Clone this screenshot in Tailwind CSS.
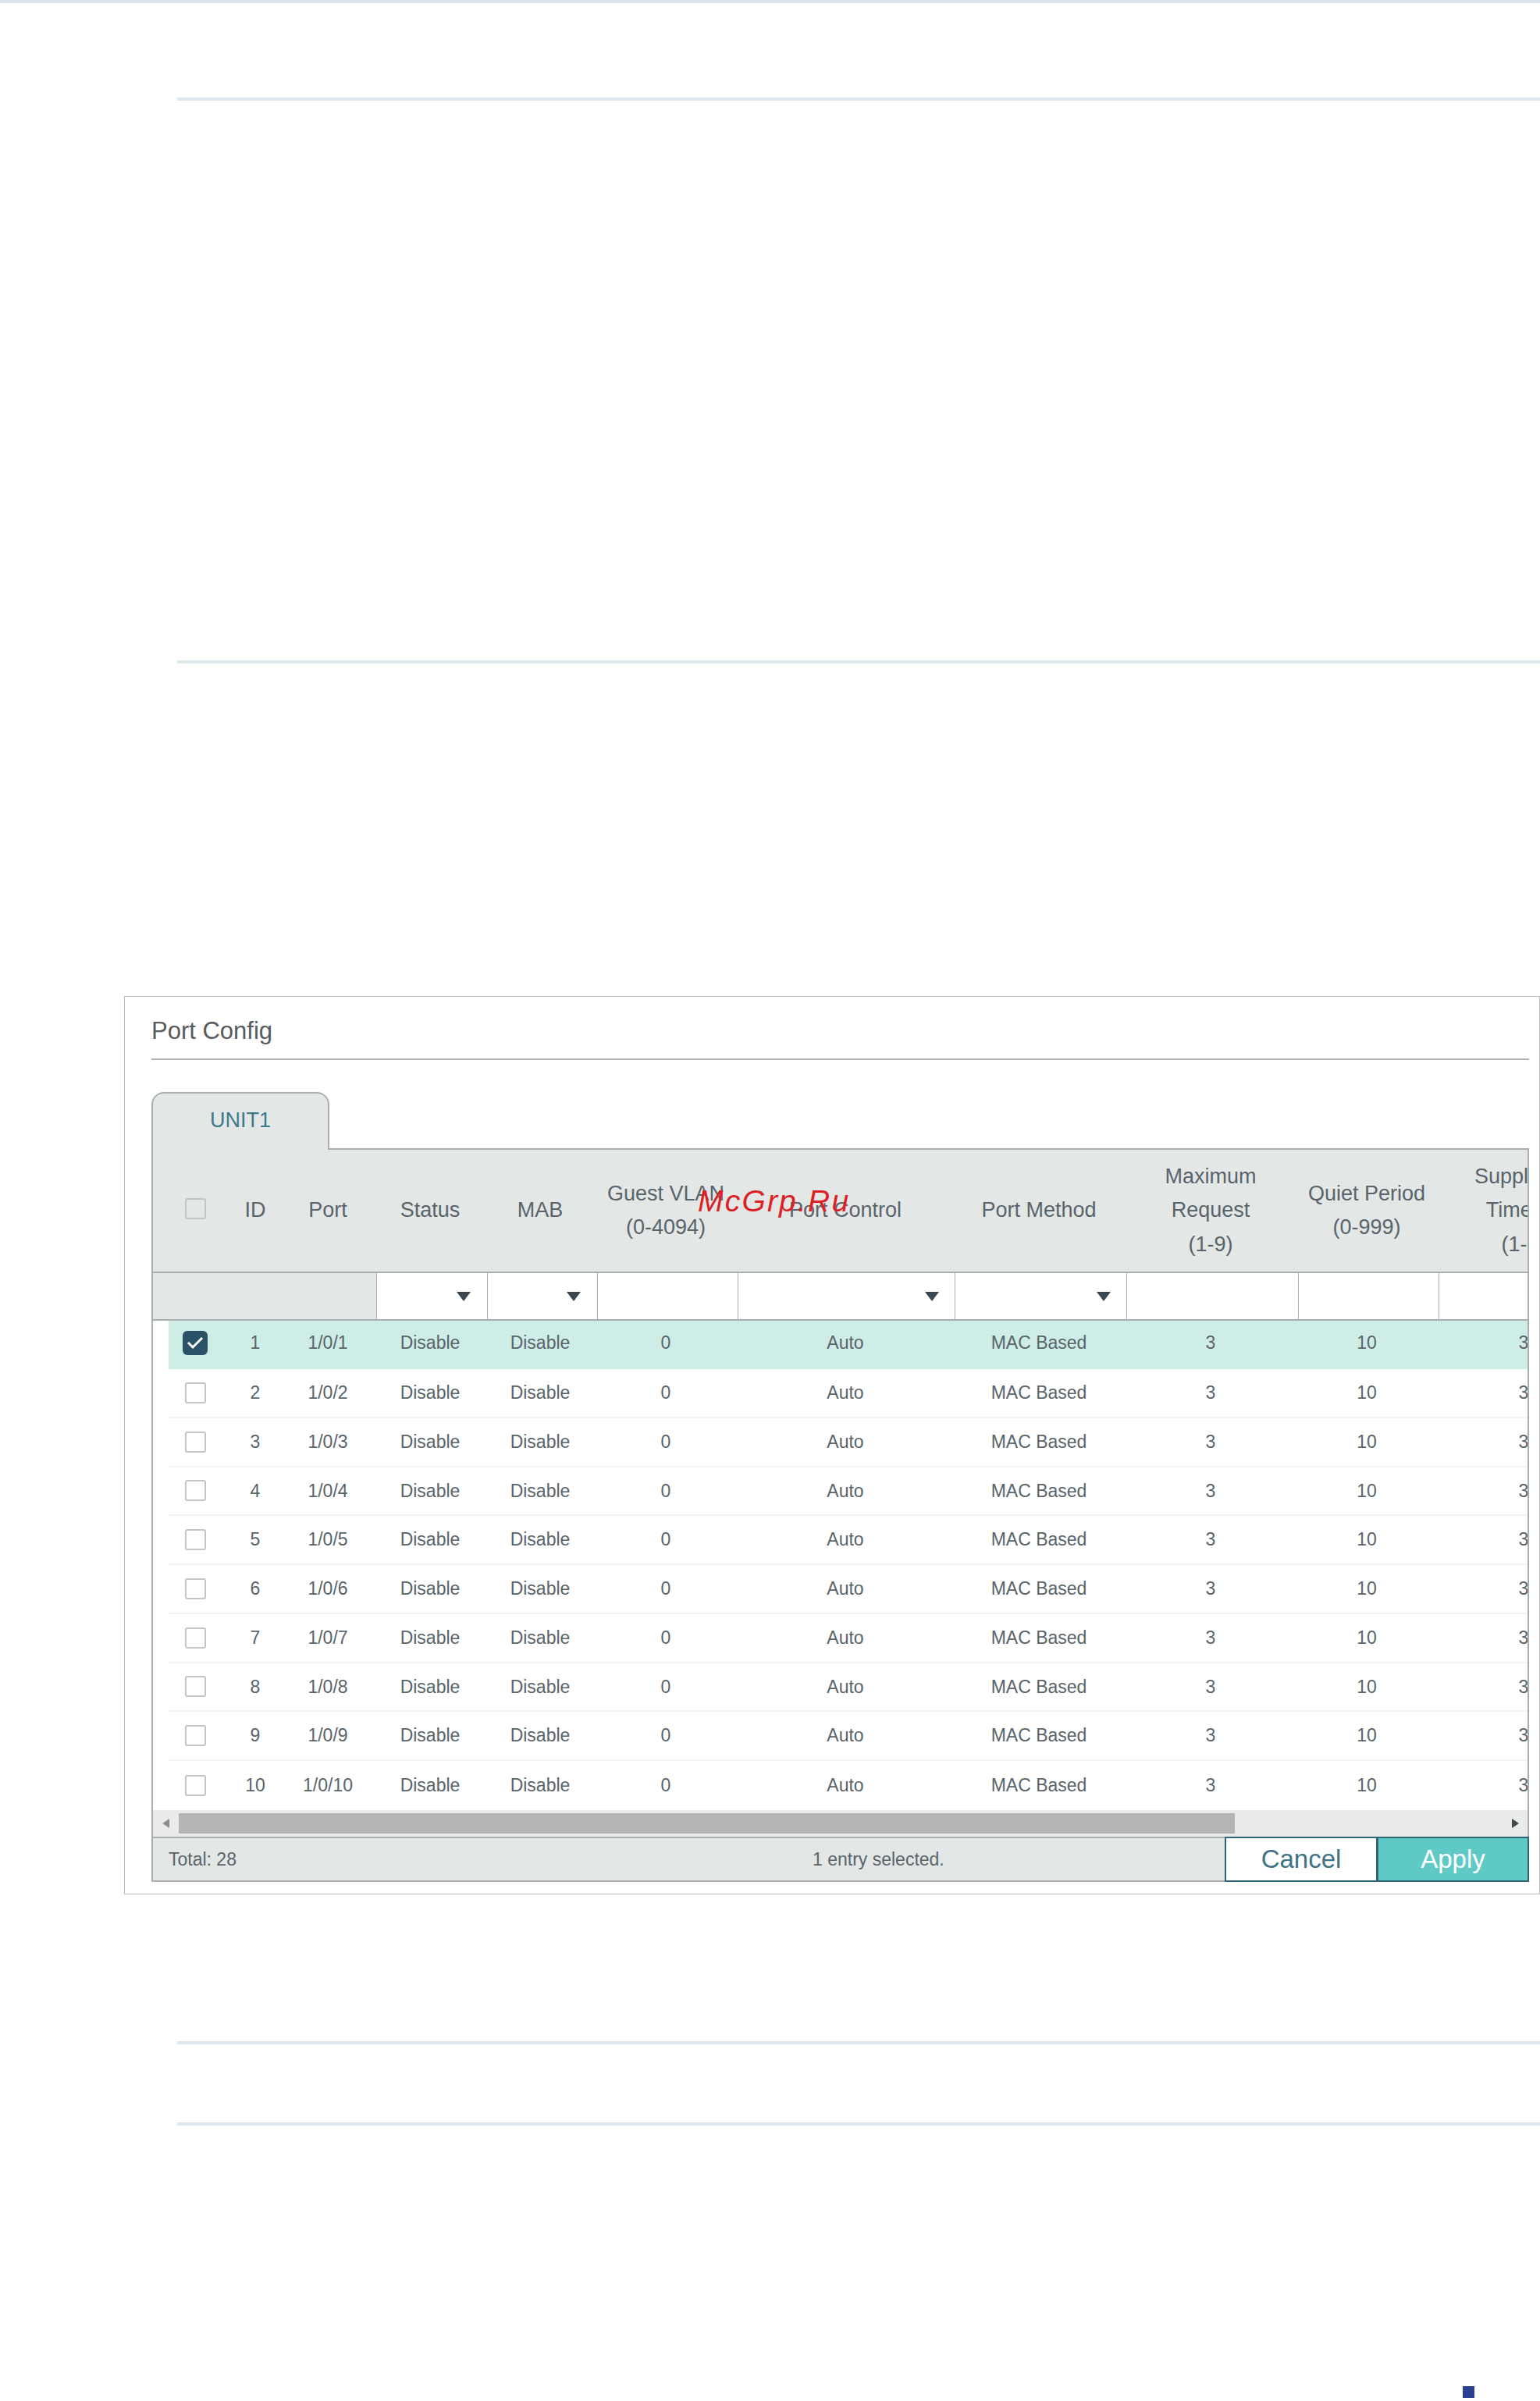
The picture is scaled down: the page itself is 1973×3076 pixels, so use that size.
<!doctype html>
<html lang="en">
<head>
    <meta charset="UTF-8">
    <title>Port Config</title>
    <script src="https://cdn.jsdelivr.net/npm/@tailwindcss/browser@4"></script>
</head>
<body class="bg-white font-['Liberation_Sans',Arial,sans-serif] text-[#59646a]">
<div class="relative w-[1973px] h-[3076px] overflow-hidden">
    <div class="h-1 bg-[#dde6eb]"></div>
    <div class="h-1 ml-[227px] mt-[121px] bg-[#dde6eb]"></div>
    <div class="h-1 ml-[227px] mt-[717px] bg-[#dde6eb]"></div>

    <!-- port config panel -->
    <section class="ml-[159px] mt-[426px] w-[1814px] h-[1151px] border border-[#bbbdbd] pl-[34px] pr-[13px]">
        <h2 class="pt-[26px] pb-[17px] text-[31px] leading-[36px] font-normal text-[#555b5e] border-b-2 border-[#aeb3b5]">Port Config</h2>

        <div class="relative z-10 flex items-center justify-center w-[228px] h-[74px] mt-[41px] -mb-[2px] pb-1 bg-[#e3e7e6] border-2 border-b-0 border-[#a9afb1] rounded-t-[16px] text-[27px] text-[#3f7a8a]">UNIT1</div>

        <div class="w-[1765px] border-x-2 border-t-2 border-[#a9afb1]">
            <div class="overflow-hidden">
                <!-- header -->
                <div class="bg-[#e3e7e6] h-[156px] pl-5 w-[1858px] grid grid-cols-[68px_86px_100px_162px_120px_202px_258px_238px_202px_198px_204px] items-center text-center text-[27px] leading-[43.5px]">
                    <div class="flex justify-center -mt-[5px]"><span class="block w-[27px] h-[27px] border-2 border-[#c2c6c7] rounded-[3px]"></span></div>
                    <div>ID</div>
                    <div>Port</div>
                    <div>Status</div>
                    <div>MAB</div>
                    <div>Guest VLAN<br>(0-4094)</div>
                    <div>Port Control</div>
                    <div>Port Method</div>
                    <div>Maximum<br>Request<br>(1-9)</div>
                    <div>Quiet Period<br>(0-999)</div>
                    <div>Supplicant<br>Timeout<br>(1-9)</div>
                </div>
                <!-- filter row -->
                <div class="h-[63px] w-[1858px] border-y-2 border-[#a9afb1] grid grid-cols-[287px_142px_141px_180px_278px_220px_220px_180px_208px] *:border-r *:border-[#a9afb1] *:flex *:items-center *:justify-end">
                    <div class="bg-[#e3e7e6]"></div>
                    <div class="pr-[21px]"><span class="block border-x-[9px] border-x-transparent border-t-[12px] border-t-[#3a4650]"></span></div>
                    <div class="pr-[21px]"><span class="block border-x-[9px] border-x-transparent border-t-[12px] border-t-[#3a4650]"></span></div>
                    <div></div>
                    <div class="pr-[20px]"><span class="block border-x-[9px] border-x-transparent border-t-[12px] border-t-[#3a4650]"></span></div>
                    <div class="pr-[20px]"><span class="block border-x-[9px] border-x-transparent border-t-[12px] border-t-[#3a4650]"></span></div>
                    <div></div>
                    <div></div>
                    <div></div>
                </div>
                <!-- rows are filled in below -->
                <div id="rows" class="ml-5 w-[1838px] text-[23px] text-center"></div>
            </div>

            <!-- scrollbar -->
            <div class="h-[34px] flex items-center bg-[#ebebeb]">
                <div class="w-[33px] flex justify-center"><span class="block border-y-[6.5px] border-y-transparent border-r-[9px] border-r-[#8a8f91]"></span></div>
                <div class="w-[1353px] h-[26px] bg-[#b5b5b5]"></div>
                <div class="ml-auto mr-[11px]"><span class="block border-y-[6.5px] border-y-transparent border-l-[9px] border-l-[#3f4a4f]"></span></div>
            </div>

            <!-- footer -->
            <div class="relative z-10 h-[58px] -mr-[2px] flex items-stretch">
                <div class="flex-1 flex items-center bg-[#e3e7e6] border-y-2 border-[#a9afb1] text-[23px] pl-5">
                    <span class="w-[825px]">Total: 28</span>
                    <span>1 entry selected.</span>
                </div>
                <button class="w-[196px] bg-white border-2 border-[#2f6477] text-[33px] text-[#3f7385]">Cancel</button>
                <button class="w-[195px] -ml-[1px] bg-[#5fcac5] border-2 border-[#2f6477] text-[33px] text-white">Apply</button>
            </div>
        </div>
    </section>

    <div class="h-1 ml-[227px] mt-[188px] bg-[#dde6eb]"></div>
    <div class="h-1 ml-[227px] mt-[100px] bg-[#dde6eb]"></div>
    <div class="w-[15px] h-[15px] ml-auto mr-[84px] mt-[334px] bg-[#2a4093]"></div>

    <!-- site watermark over the table -->
    <div class="absolute left-[894px] top-[1516px] italic text-[39px] leading-[46px] tracking-[2.2px] text-[#dd1f26]">McGrp.Ru</div>
</div>
<script>
    const rows = document.querySelector("#rows");
    const gridClass = "grid grid-cols-[68px_86px_100px_162px_120px_202px_258px_238px_202px_198px_204px] items-center";

    for (let i = 1; i <= 10; i++) {
        const checked = i === 1;
        const row = document.createElement("div");
        if (checked) {
            row.className = gridClass + " h-[62px] pb-[6px] bg-[#cfede7]";
        } else if (i === 10) {
            row.className = gridClass + " h-[62.75px]";
        } else {
            row.className = gridClass + " h-[62.75px] border-b-2 border-[#f3f4f4]";
        }
        const box = checked
            ? `<svg width="32" height="31" viewBox="0 0 32 31" class="block"><rect width="32" height="31" rx="6" fill="#2a5267"/><path d="M7 15l6 6L25 9" fill="none" stroke="#fff" stroke-width="3"/></svg>`
            : `<span class="block w-[27px] h-[27px] bg-white border-2 border-[#c2c6c7] rounded-[3px]"></span>`;
        row.innerHTML = `<div class="flex justify-center">${box}</div>
            <div>${i}</div><div>1/0/${i}</div><div>Disable</div><div>Disable</div><div>0</div>
            <div>Auto</div><div>MAC Based</div><div>3</div><div>10</div><div>3</div>`;
        rows.appendChild(row);
    }
</script>
</body>
</html>
